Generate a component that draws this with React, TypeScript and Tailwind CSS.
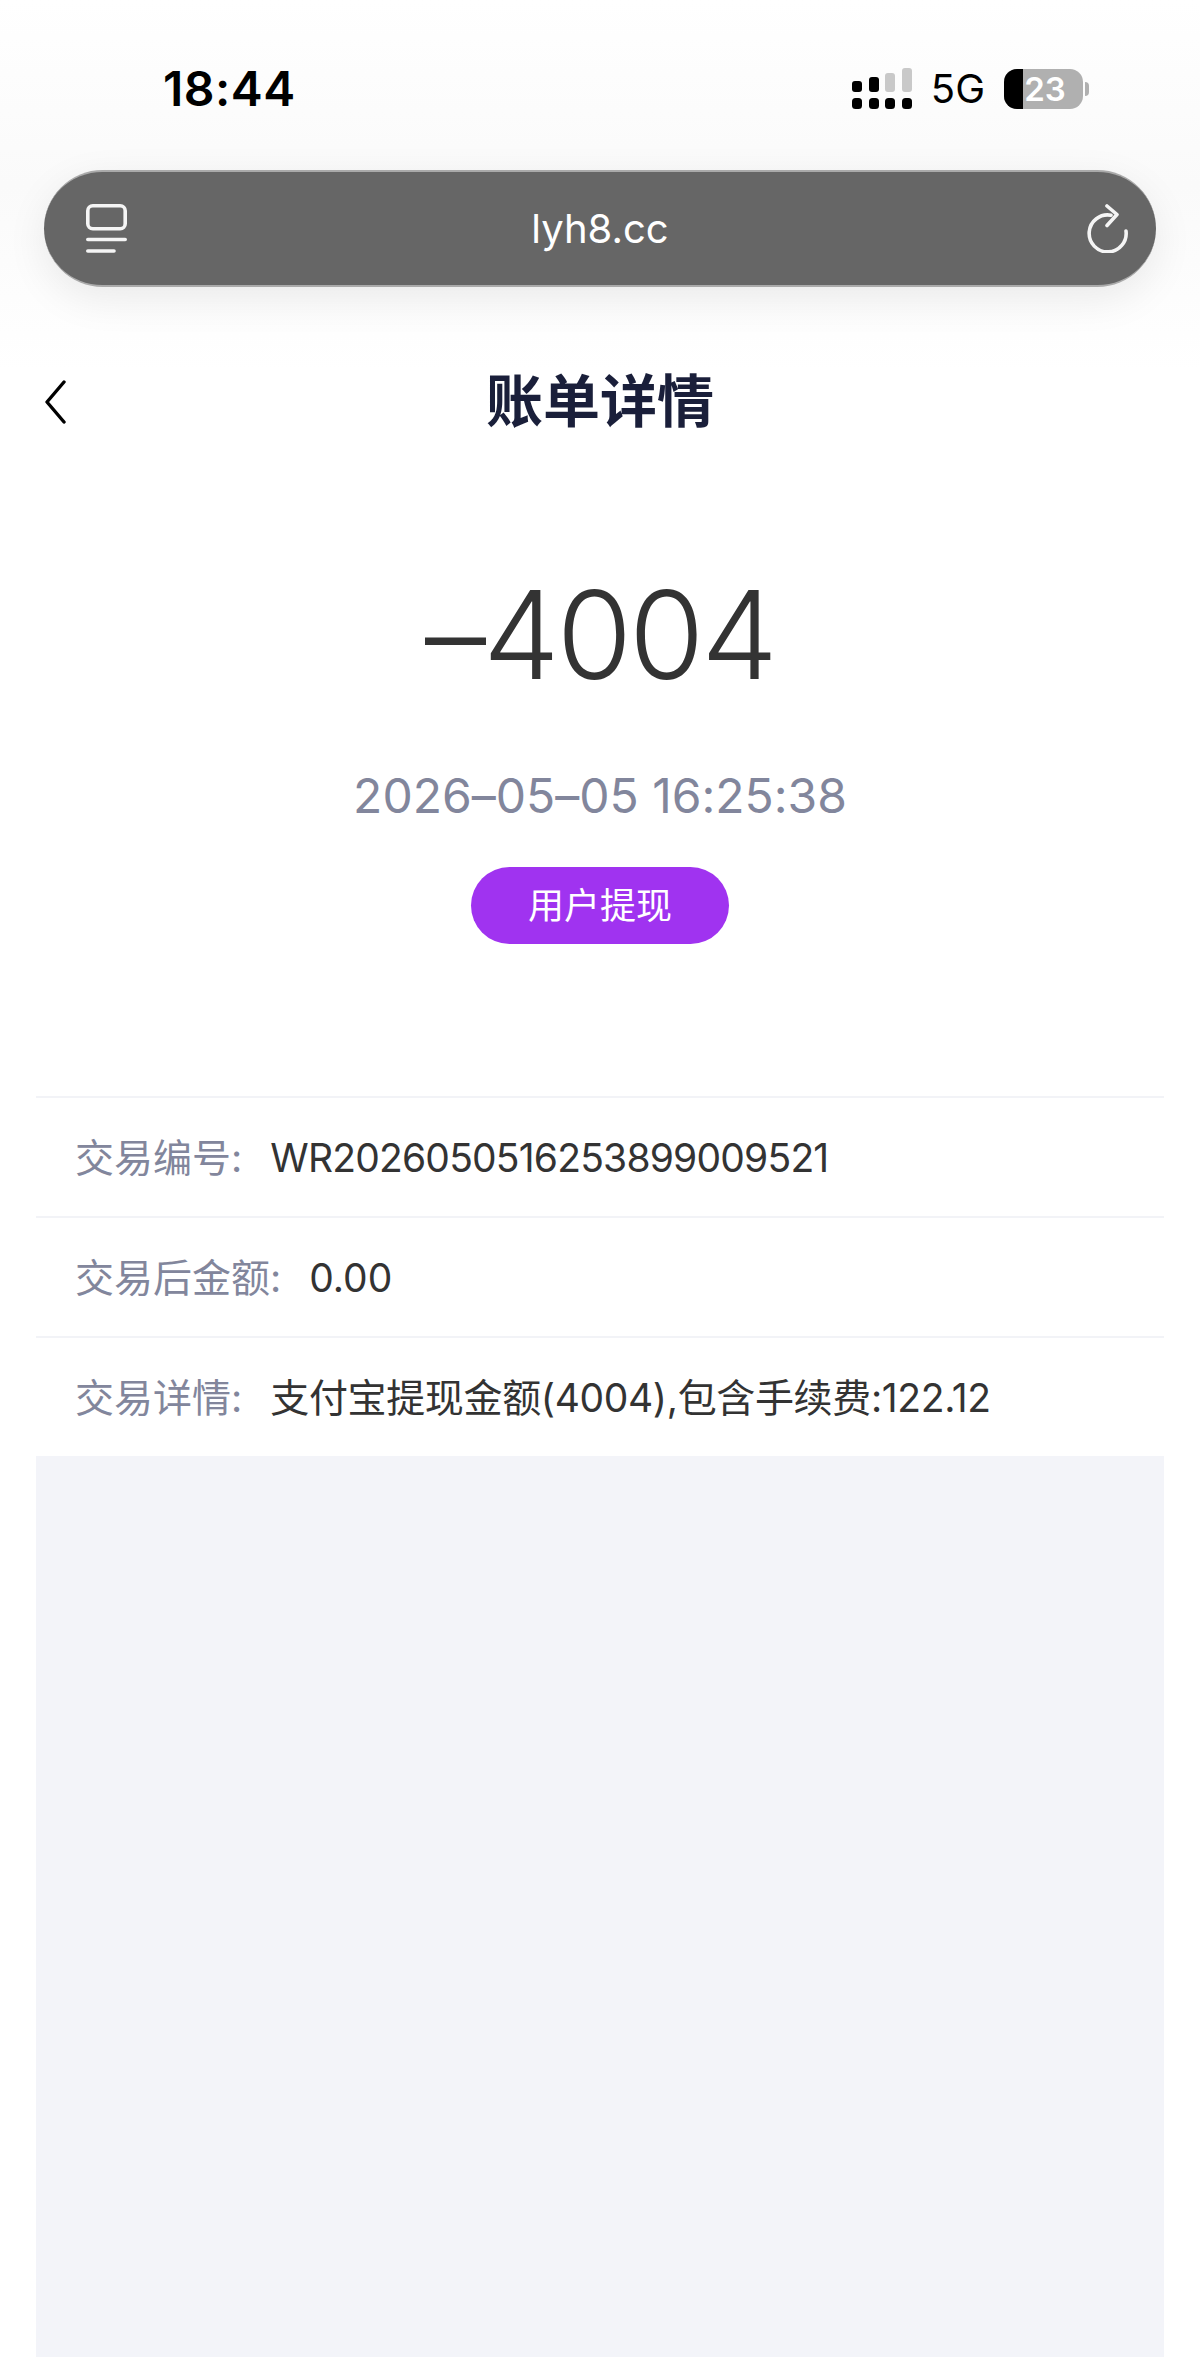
import React from "react";

function Signal() {
  return (
    <svg width="60" height="42" viewBox="0 0 60 42" className="block">
      <rect x="0" y="13" width="10" height="11" rx="3" fill="#000" />
      <rect x="17" y="9" width="10" height="15" rx="3" fill="#000" />
      <rect x="33" y="5" width="10" height="19" rx="3" fill="#c9c9c9" />
      <rect x="50" y="0" width="10" height="24" rx="3" fill="#c9c9c9" />
      <rect x="0" y="30" width="10" height="11" rx="3.5" fill="#000" />
      <rect x="17" y="30" width="10" height="11" rx="3.5" fill="#000" />
      <rect x="33" y="30" width="10" height="11" rx="3.5" fill="#000" />
      <rect x="50" y="30" width="10" height="11" rx="3.5" fill="#000" />
    </svg>
  );
}

function Battery() {
  return (
    <div className="flex items-center">
      <div className="relative flex h-[40px] w-[79px] items-center justify-center overflow-hidden rounded-[13px] bg-[#b0b0b0]">
        <div className="absolute inset-y-0 left-0 w-[19px] bg-black" />
        <span className="relative ml-[3px] text-[33px] leading-none font-semibold text-white">23</span>
      </div>
      <div className="ml-[2px] h-[14px] w-[4px] rounded-r-full bg-[#b0b0b0]" />
    </div>
  );
}

function TabsIcon() {
  return (
    <svg width="41" height="49" viewBox="0 0 41 49" fill="none" stroke="#f5f5f5" strokeWidth="3.6" strokeLinecap="round" className="block">
      <rect x="1.800" y="1.800" width="37.400" height="23" rx="5" />
      <path d="M1.800 35.500H39.200" />
      <path d="M1.800 47H28" />
    </svg>
  );
}

function ReloadIcon() {
  return (
    <svg width="41" height="49" viewBox="0 0 41 49" fill="none" stroke="#f5f5f5" strokeWidth="3.6" strokeLinecap="round" strokeLinejoin="round" className="block">
      <path d="M24 11.200A18.500 18.500 0 1 0 39 27" />
      <path d="M20 2l10 8.500-10 11" />
    </svg>
  );
}

function Row({ label, value, gapClass, valueClass }: { label: string; value: string; gapClass: string; valueClass: string }) {
  return (
    <div className="flex h-[120px] items-center border-t-2 border-[#f2f3f7] pt-[2px] pl-[39px] text-[39px]">
      <span className="text-[#82869c]">{label}</span>
      <span className={`${gapClass} ${valueClass} text-[#333333]`}>{value}</span>
    </div>
  );
}

export default function App() {
  return (
    <div className="h-[2366px] w-[1200px] overflow-hidden bg-white font-['Inter','Noto_Sans_CJK_SC',sans-serif] [font-feature-settings:'calt'_0]">
      <div className="bg-gradient-to-b from-white via-[#fafafa] to-white px-[44px] pt-[58px] pb-[84px]">
        <div className="flex h-[62px] items-center justify-between pr-[67px] pl-[119px]">
          <span className="text-[48px] leading-none font-semibold tracking-[0.5px] text-black">18:44</span>
          <div className="flex items-center">
            <Signal />
            <span className="mr-[19px] ml-[19px] text-[40px] leading-none text-black">5G</span>
            <Battery />
          </div>
        </div>
        <div className="mt-[50px] flex h-[117px] items-center justify-between rounded-full border-y-2 border-[#aaaaaa] bg-[#666666] pr-[28px] pl-[42px] shadow-[0_12px_40px_rgba(0,0,0,0.08)]">
          <TabsIcon />
          <span className="mr-[14px] text-[40px] leading-none text-white">lyh8.cc</span>
          <ReloadIcon />
        </div>
      </div>

      <div className="relative flex h-[60px] items-center justify-center">
        <svg width="24" height="44" viewBox="0 0 24 44" fill="none" stroke="#000" strokeWidth="3.4" strokeLinecap="round" strokeLinejoin="round" className="absolute top-[9px] left-[44px]">
          <path d="M20 2L3 22l17 20" />
        </svg>
        <h1 className="text-[57px] leading-none font-bold text-[#1a1f3a]">账单详情</h1>
      </div>

      <div className="mt-[143px] flex flex-col items-center">
        <div className="text-[122px] leading-none font-light tracking-[-3px] text-[#333333]">–4004</div>
        <div className="mt-[76px] text-[48px] leading-none text-[#82869c]">2026–05–05 16:25:38</div>
        <div className="mt-[47px] flex h-[77px] w-[258px] items-center justify-center rounded-full bg-[#a033f0] text-[36px] text-white">用户提现</div>
      </div>

      <div className="mx-[36px] mt-[152px]">
        <Row label="交易编号:" value="WR2026050516253899009521" gapClass="ml-[28px]" valueClass="tracking-[-0.8px]" />
        <Row label="交易后金额:" value="0.00" gapClass="ml-[28px]" valueClass="" />
        <Row label="交易详情:" value="支付宝提现金额(4004),包含手续费:122.12" gapClass="ml-[28px]" valueClass="tracking-[-0.35px]" />
        <div className="h-[901px] bg-[#f3f4f9]" />
      </div>
    </div>
  );
}
